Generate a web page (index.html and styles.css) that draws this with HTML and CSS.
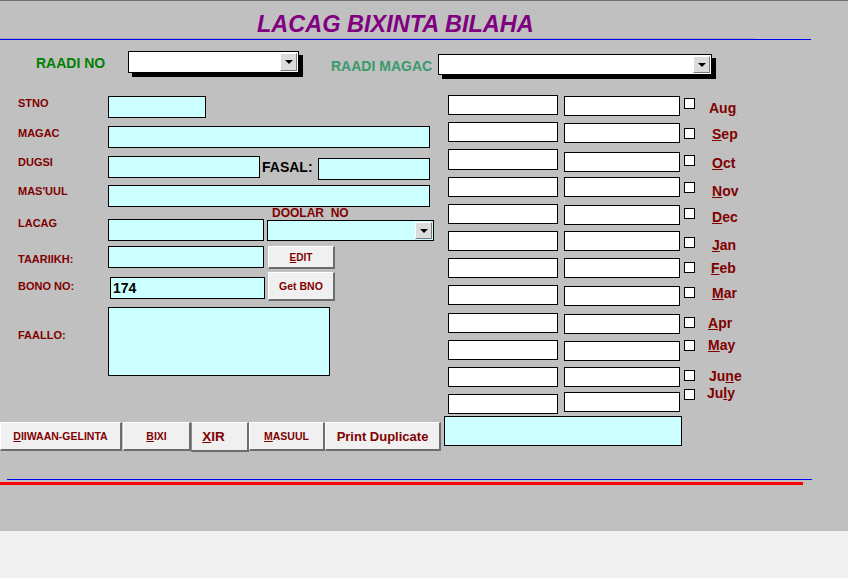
FILE: index.html
```html
<!DOCTYPE html>
<html>
<head>
<meta charset="utf-8">
<title>LACAG BIXINTA BILAHA</title>
<link rel="stylesheet" href="styles.css">
</head>
<body>
<div class="form">
  <header class="header">
    <h1 class="title">LACAG BIXINTA BILAHA</h1>
  </header>
  <div class="hline-gray"></div>
  <div class="hline-blue"></div>

  <div class="search">
    <span class="search-label raadi-no">RAADI NO</span>
    <div class="combo combo-no"><div class="drop"><i class="arrow"></i></div></div>
    <span class="search-label raadi-magac">RAADI MAGAC</span>
    <div class="combo combo-magac"><div class="drop"><i class="arrow"></i></div></div>
  </div>

  <div class="main">
    <div class="left">
      <div class="row r-stno">
        <span class="lbl">STNO</span>
        <div class="field w-stno"></div>
      </div>
      <div class="row r-magac">
        <span class="lbl">MAGAC</span>
        <div class="field w-wide"></div>
      </div>
      <div class="row r-dugsi">
        <span class="lbl">DUGSI</span>
        <div class="field w-dugsi"></div>
        <span class="fasal-lbl">FASAL:</span>
        <div class="field w-fasal"></div>
      </div>
      <div class="row r-masuul">
        <span class="lbl">MAS'UUL</span>
        <div class="field w-wide"></div>
      </div>
      <div class="row r-lacag">
        <span class="lbl">LACAG</span>
        <div class="field w-mid"></div>
        <div class="doolar">
          <span class="doolar-lbl">DOOLAR&nbsp;&nbsp;NO</span>
          <div class="combo-cyan"><div class="drop"><i class="arrow"></i></div></div>
        </div>
      </div>
      <div class="row r-taariikh">
        <span class="lbl">TAARIIKH:</span>
        <div class="field w-mid"></div>
        <button class="btn btn-edit"><u>E</u>DIT</button>
      </div>
      <div class="row r-bono">
        <span class="lbl">BONO NO:</span>
        <div class="field w-bono">174</div>
        <button class="btn btn-getbno">Get BNO</button>
      </div>
      <div class="row r-faallo">
        <span class="lbl">FAALLO:</span>
        <div class="field w-faallo"></div>
      </div>
      <div class="buttons">
        <button class="btn bb b-diiwaan"><u>D</u>IIWAAN-GELINTA</button>
        <button class="btn bb b-bixi"><u>B</u>IXI</button>
        <button class="btn bb b-xir"><u>X</u>IR</button>
        <button class="btn bb b-masuul"><u>M</u>ASUUL</button>
        <button class="btn bb b-print">Print Duplicate</button>
      </div>
    </div>

    <div class="right">
      <div class="months">
        <div class="mrow"><div class="box c1"></div><div class="box c2"></div><div class="cb"></div><span class="mlbl">Au<u>g</u></span></div>
        <div class="mrow"><div class="box c1"></div><div class="box c2"></div><div class="cb"></div><span class="mlbl"><u>S</u>ep</span></div>
        <div class="mrow"><div class="box c1"></div><div class="box c2"></div><div class="cb"></div><span class="mlbl"><u>O</u>ct</span></div>
        <div class="mrow"><div class="box c1"></div><div class="box c2"></div><div class="cb"></div><span class="mlbl"><u>N</u>ov</span></div>
        <div class="mrow"><div class="box c1"></div><div class="box c2"></div><div class="cb"></div><span class="mlbl"><u>D</u>ec</span></div>
        <div class="mrow"><div class="box c1"></div><div class="box c2"></div><div class="cb"></div><span class="mlbl"><u>J</u>an</span></div>
        <div class="mrow"><div class="box c1"></div><div class="box c2"></div><div class="cb"></div><span class="mlbl"><u>F</u>eb</span></div>
        <div class="mrow"><div class="box c1"></div><div class="box c2"></div><div class="cb"></div><span class="mlbl"><u>M</u>ar</span></div>
        <div class="mrow"><div class="box c1"></div><div class="box c2"></div><div class="cb"></div><span class="mlbl"><u>A</u>pr</span></div>
        <div class="mrow"><div class="box c1"></div><div class="box c2"></div><div class="cb"></div><span class="mlbl"><u>M</u>ay</span></div>
        <div class="mrow"><div class="box c1"></div><div class="box c2"></div><div class="cb"></div><span class="mlbl">Ju<u>n</u>e</span></div>
        <div class="mrow"><div class="box c1"></div><div class="box c2"></div><div class="cb"></div><span class="mlbl">Ju<u>l</u>y</span></div>
      </div>
      <div class="total"></div>
    </div>
  </div>

  <div class="rule-blue"></div>
  <div class="rule-red"></div>
</div>
</body>
</html>
```
FILE: styles.css
```css
* { box-sizing: border-box; }

html, body {
  margin: 0;
  padding: 0;
  background: #f0f0f0;
  font-family: "Liberation Sans", Arial, sans-serif;
}

.form {
  width: 848px;
  height: 531px;
  background: #c0c0c0;
  border-top: 1px solid #6e6e6e;
  overflow: hidden;
}

/* header */
.header { height: 37px; }
.title {
  margin: 0;
  padding: 10px 0 0 257px;
  font-size: 23.5px;
  line-height: 27px;
  font-weight: bold;
  font-style: italic;
  color: #800080;
}
.hline-gray { width: 755px; height: 1px; background: #a6a6a6; }
.hline-blue { width: 811px; height: 1px; background: #0000ff; }

/* search row */
.search {
  display: flex;
  align-items: flex-start;
  height: 55px;
}
.search-label {
  font-size: 14px;
  line-height: 16px;
  font-weight: bold;
  white-space: nowrap;
}
.raadi-no { color: #008000; margin: 15px 0 0 36px; width: 92px; }
.raadi-magac { color: #3a9a6c; margin: 18px 0 0 32px; width: 107px; }

.combo {
  position: relative;
  background: #fff;
  border: 1px solid #000;
  box-shadow: 4px 4px 0 #000;
  display: flex;
  justify-content: flex-end;
  padding: 1px;
}
.combo-no { width: 171px; height: 22px; margin-top: 11px; }
.combo-magac { width: 274px; height: 21px; margin-top: 14px; }

.drop {
  width: 17px;
  height: 100%;
  background: #dcdcdc;
  border-style: solid;
  border-width: 1px;
  border-color: #fff #7a7a7a #7a7a7a #fff;
  display: flex;
  align-items: center;
  justify-content: center;
}
.arrow {
  display: block;
  width: 0;
  height: 0;
  border-left: 4px solid transparent;
  border-right: 4px solid transparent;
  border-top: 4px solid #000;
}

/* main area */
.main { display: flex; align-items: flex-start; }
.left { width: 444px; display: flex; flex-direction: column; }
.right { display: flex; flex-direction: column; }

.row { display: flex; align-items: flex-start; }
.lbl {
  width: 108px;
  padding-left: 18px;
  font-size: 11px;
  line-height: 13px;
  font-weight: bold;
  color: #800000;
  white-space: nowrap;
}
.field {
  background: #ccffff;
  border: 1px solid #000;
  height: 22px;
}

.r-stno { margin-top: 1px; }
.r-stno .lbl { margin-top: 1px; }
.w-stno { width: 98px; }

.r-magac { margin-top: 8px; }
.r-magac .lbl { margin-top: 1px; }
.w-wide { width: 322px; }

.r-dugsi { margin-top: 8px; }
.w-dugsi { width: 152px; }
.fasal-lbl {
  width: 56px;
  margin: 3px 0 0 2px;
  font-size: 14px;
  line-height: 16px;
  font-weight: bold;
  color: #000;
}
.w-fasal { width: 112px; margin-top: 2px; }

.r-masuul { margin-top: 5px; }

.r-lacag .lbl { margin-top: 10px; }
.w-mid { width: 156px; }
.r-lacag .w-mid { margin-top: 12px; }
.doolar { margin-left: 3px; display: flex; flex-direction: column; }
.doolar-lbl {
  height: 13px;
  padding-left: 5px;
  font-size: 12px;
  line-height: 13px;
  font-weight: bold;
  color: #800000;
}
.combo-cyan {
  width: 167px;
  height: 21px;
  background: #ccffff;
  border: 1px solid #000;
  display: flex;
  justify-content: flex-end;
  padding: 1px;
}

.r-taariikh { margin-top: 5px; }
.r-taariikh .lbl { margin-top: 7px; }

.btn {
  background: #f0f0f0;
  border-style: solid;
  border-width: 1px 2px 2px 1px;
  border-color: #fff #6d6d6d #6d6d6d #fff;
  color: #800000;
  font-family: "Liberation Sans", Arial, sans-serif;
  font-weight: bold;
  padding: 0;
  display: flex;
  align-items: center;
  justify-content: center;
  white-space: nowrap;
}
.btn-edit { width: 67px; height: 23px; margin-left: 4px; font-size: 10px; }

.r-bono { margin-top: 3px; }
.r-bono .lbl { margin-top: 8px; }
.w-bono {
  width: 155px;
  margin: 5px 0 0 2px;
  padding-left: 2px;
  font-size: 14px;
  line-height: 20px;
  font-weight: bold;
  color: #000;
}
.btn-getbno { width: 67px; height: 29px; margin-left: 3px; font-size: 10.5px; }

.r-faallo { margin-top: 6px; }
.r-faallo .lbl { margin-top: 22px; }
.w-faallo { width: 222px; height: 69px; }

.buttons {
  margin-top: 46px;
  display: flex;
  align-items: flex-start;
}
.bb { height: 29px; font-size: 10.5px; }
.b-diiwaan { width: 122px; }
.b-bixi { width: 68px; margin-left: 1px; }
.b-xir {
  width: 58px;
  height: 30px;
  font-size: 13.5px;
  padding-right: 12px;
  border-left-color: #8a8a8a;
}
.b-masuul { width: 76px; }
.b-print { width: 116px; font-size: 13px; }

/* months */
.months { padding-left: 4px; display: flex; flex-direction: column; }
.mrow { display: flex; align-items: flex-start; height: 27px; }
.mrow:last-child { height: 22px; }
.box { background: #fff; border: 1px solid #000; height: 20px; }
.c1 { width: 110px; }
.c2 { width: 116px; margin-left: 6px; }
.cb {
  width: 11px;
  height: 11px;
  margin-left: 4px;
  background: #fff;
  border: 1px solid #000;
}
.mlbl {
  margin-left: 17px;
  font-size: 14px;
  line-height: 16px;
  font-weight: bold;
  color: #800000;
  white-space: nowrap;
}

.mrow:nth-child(1) .c2 { margin-top: 1px; }
.mrow:nth-child(1) .cb { margin-top: 3px; }
.mrow:nth-child(1) .mlbl { margin-top: 5px; margin-left: 14px; }

.mrow:nth-child(2) .c2 { margin-top: 1px; }
.mrow:nth-child(2) .cb { margin-top: 6px; }
.mrow:nth-child(2) .mlbl { margin-top: 4px; }

.mrow:nth-child(3) .c1 { height: 21px; }
.mrow:nth-child(3) .c2 { margin-top: 3px; }
.mrow:nth-child(3) .cb { margin-top: 6px; }
.mrow:nth-child(3) .mlbl { margin-top: 6px; }

.mrow:nth-child(4) { margin-top: 1px; }
.mrow:nth-child(4) .cb { margin-top: 5px; }
.mrow:nth-child(4) .mlbl { margin-top: 6px; }

.mrow:nth-child(5) .c2 { margin-top: 1px; }
.mrow:nth-child(5) .cb { margin-top: 4px; }
.mrow:nth-child(5) .mlbl { margin-top: 5px; }

.mrow:nth-child(6) .cb { margin-top: 6px; }
.mrow:nth-child(6) .mlbl { margin-top: 6px; }

.mrow:nth-child(7) .cb { margin-top: 4px; }
.mrow:nth-child(7) .mlbl { margin-top: 2px; margin-left: 16px; }

.mrow:nth-child(8) .c2 { margin-top: 1px; }
.mrow:nth-child(8) .cb { margin-top: 2px; }
.mrow:nth-child(8) .mlbl { margin-top: 0; }

.mrow:nth-child(9) { margin-top: 1px; }
.mrow:nth-child(9) .c2 { margin-top: 1px; }
.mrow:nth-child(9) .cb { margin-top: 4px; }
.mrow:nth-child(9) .mlbl { margin-top: 2px; margin-left: 13px; }

.mrow:nth-child(10) .c2 { margin-top: 1px; }
.mrow:nth-child(10) .cb { margin-top: 0; }
.mrow:nth-child(10) .mlbl { margin-top: -3px; margin-left: 13px; }

.mrow:nth-child(11) .cb { margin-top: 3px; }
.mrow:nth-child(11) .mlbl { margin-top: 1px; margin-left: 14px; }

.mrow:nth-child(12) .c2 { margin-top: -2px; }
.mrow:nth-child(12) .cb { margin-top: -5px; }
.mrow:nth-child(12) .mlbl { margin-top: -9px; margin-left: 12px; }

.total {
  width: 238px;
  height: 30px;
  background: #ccffff;
  border: 1px solid #000;
}

/* bottom rules */
.rule-blue {
  margin: 27px 0 0 7px;
  width: 805px;
  height: 1px;
  background: #0000ff;
}
.rule-red {
  margin-top: 2px;
  width: 803px;
  height: 3px;
  background: #ff0000;
}
```
